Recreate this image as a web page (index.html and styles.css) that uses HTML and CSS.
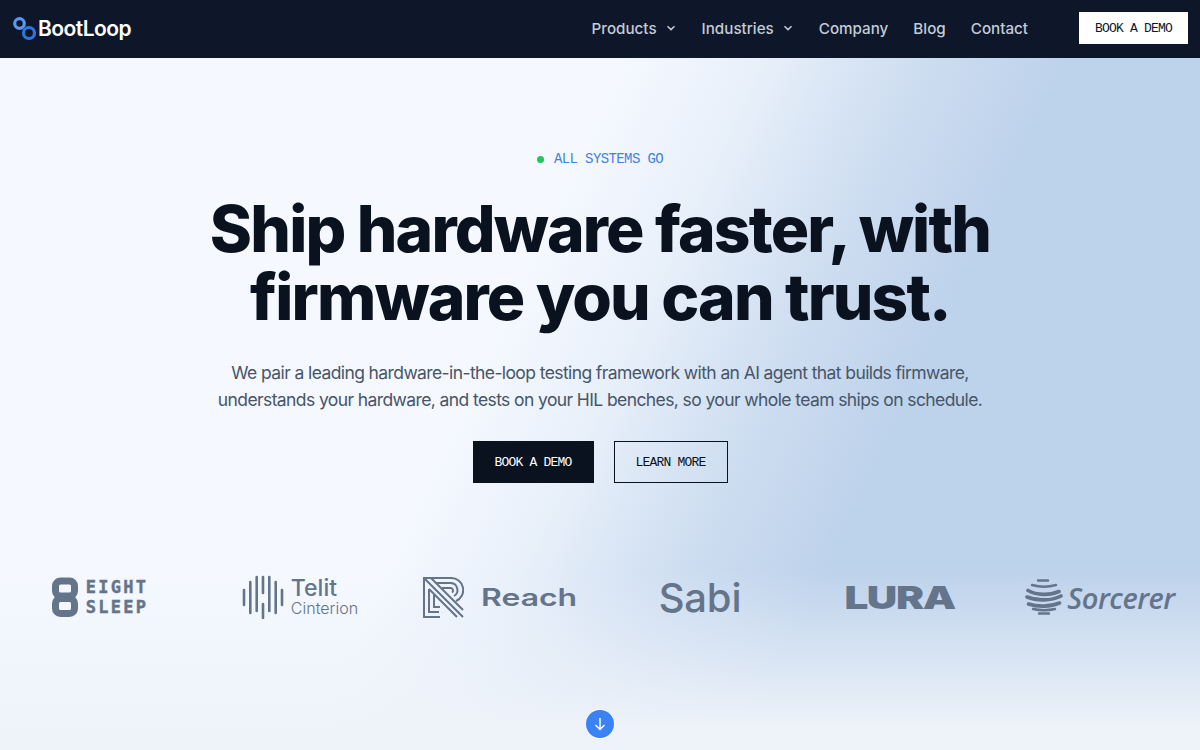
FILE: index.html
```html
<!DOCTYPE html>
<html lang="en">
<head>
  <meta charset="UTF-8">
  <meta name="viewport" content="width=device-width, initial-scale=1.0">
  <title>BootLoop</title>
  <link rel="stylesheet" href="styles.css">
</head>
<body>
  <!-- top bar -->
  <header class="topbar">
    <a class="brand" href="#">
      <svg class="brand-icon" width="24" height="24" viewBox="0 0 24 24" fill="none">
        <circle cx="6.500" cy="6.500" r="4.800" stroke="#5b97ee" stroke-width="3.200"/>
        <circle cx="16" cy="16" r="5.500" stroke="#2f74e0" stroke-width="3.200"/>
      </svg>
      <span>BootLoop</span>
    </a>
    <nav class="nav">
      <a href="#">Products
        <svg class="chev" width="10" height="6" viewBox="0 0 10 6" fill="none"><path d="M1.500 1.200 5 4.600l3.500-3.400" stroke="#c3cbd6" stroke-width="1.500"/></svg>
      </a>
      <a href="#">Industries
        <svg class="chev" width="10" height="6" viewBox="0 0 10 6" fill="none"><path d="M1.500 1.200 5 4.600l3.500-3.400" stroke="#c3cbd6" stroke-width="1.500"/></svg>
      </a>
      <a href="#">Company</a>
      <a href="#">Blog</a>
      <a href="#">Contact</a>
    </nav>
    <a class="btn btn-white" href="#">BOOK A DEMO</a>
  </header>

  <!-- hero -->
  <main class="hero">
    <div class="status"><span class="status-dot"></span>ALL SYSTEMS GO</div>
    <h1>Ship hardware faster, with<br>firmware you can trust.</h1>
    <p class="lead">We pair a leading hardware-in-the-loop testing framework with an AI agent that builds firmware,<br>understands your hardware, and tests on your HIL benches, so your whole team ships on schedule.</p>
    <div class="actions">
      <a class="btn btn-dark" href="#">BOOK A DEMO</a>
      <a class="btn btn-outline" href="#">LEARN MORE</a>
    </div>

    <!-- customer logos -->
    <div class="logos">
      <div class="logo logo-eight">
        <svg width="26" height="40" viewBox="0 0 26 40" fill="none" stroke="#64748b" stroke-width="7">
          <rect x="3.500" y="4" width="19" height="15" rx="5"/>
          <rect x="3.500" y="21.500" width="19" height="15" rx="5"/>
        </svg>
        <span>EIGHT<br>SLEEP</span>
      </div>
      <div class="logo logo-telit">
        <svg width="42" height="44" viewBox="0 0 42 44" stroke="#64748b" stroke-width="2.600" stroke-linecap="round">
          <path d="M2 15v15M8.300 7v31M14.700 2v34M21 2v16M21 29v14M27.300 2v34M33.700 7v31M40 15v15"/>
        </svg>
        <span class="telit-words"><b>Telit</b><i>Cinterion</i></span>
      </div>
      <div class="logo logo-reach">
        <svg width="41" height="41" viewBox="0 0 41 41" fill="none" stroke="#64748b" stroke-width="2">
          <path d="M40 40 1 1h27a12 12 0 0 1 5 23M34 40 6 12M1 1v39h16"/>
          <path d="M8 1l32 32M13 6h15a7 7 0 0 1 3 13M19 11h9a2.500 2.500 0 0 1 1 4.500M6 12v23h10M11 18v12h6"/>
        </svg>
        <span>Reach</span>
      </div>
      <div class="logo logo-sabi">Sabi</div>
      <div class="logo logo-lura"><span>LURA</span></div>
      <div class="logo logo-sorcerer">
        <svg width="38" height="36" viewBox="0 0 38 36" fill="none" stroke="#64748b" stroke-linecap="round">
          <path stroke-width="2.400" d="M13 1.500h10M7 6c7 2 17 2 24 0"/>
          <path stroke-width="3.600" d="M3 11.500c9 5 22 5 31 1M2 18c10 4 24 4 34-1M3.500 25c9 3 22 3 31-1"/>
          <path stroke-width="2.400" d="M8 30c7 1.500 15 1.500 22 0M14 34.500h10"/>
        </svg>
        <span>Sorcerer</span>
      </div>
    </div>

    <a class="scroll-down" href="#">
      <svg width="14" height="14" viewBox="0 0 14 14" fill="none" stroke="#fff" stroke-width="1.500"><path d="M7 1v11.500M2.500 8 7 12.500 11.500 8"/></svg>
    </a>
  </main>
</body>
</html>
```

FILE: styles.css
```css
* {
  box-sizing: border-box;
}
html, body {
  height: 100%;
}
body {
  margin: 0;
  font-family: "Inter", sans-serif;
  background-color: #f5f8ff;
  overflow: hidden;
}
a {
  text-decoration: none;
  color: inherit;
}
.topbar {
  height: 58px;
  background-color: #0e172a;
  display: flex;
  align-items: center;
  padding: 0 12px 2px 13px;
}
.brand {
  display: flex;
  align-items: center;
  gap: 1px;
  color: #fff;
  font-size: 21px;
  font-weight: 600;
  letter-spacing: -0.55px;
}
.brand-icon {
  margin-top: 2px;
}
.nav {
  margin-left: auto;
  display: flex;
  align-items: center;
  gap: 25px;
  color: #c3cbd6;
  font-size: 15.200px;
  font-weight: 500;
  margin-right: 51px;
}
.nav a {
  display: flex;
  align-items: center;
  gap: 9px;
}
.chev {
  margin-right: 1px;
}
.btn {
  display: flex;
  align-items: center;
  justify-content: center;
  font-family: "Liberation Mono", monospace;
  font-size: 13px;
  letter-spacing: -0.8px;
}
.btn-white {
  width: 109px;
  height: 32px;
  background-color: #fff;
  color: #0e172a;
}
.hero {
  height: 692px;
  padding-top: 91px;
  display: flex;
  flex-direction: column;
  align-items: center;
  background:
    linear-gradient(180deg, rgba(240,244,251,0) 74%, #eef3fa 97%),
    linear-gradient(115deg, #f5f8ff 41%, #e8f0fa 50%, #cfdef1 60%, #bdd2eb 70%, #bdd2eb 100%);
}
.status {
  display: flex;
  align-items: center;
  gap: 10px;
  height: 20px;
  font-family: "Liberation Mono", monospace;
  font-size: 14px;
  letter-spacing: -0.6px;
  color: #3f84dc;
}
.status-dot {
  width: 7px;
  height: 7px;
  border-radius: 50%;
  background-color: #22c55e;
}
h1 {
  margin: 26px 0 0;
  font-size: 64px;
  line-height: 68px;
  font-weight: 800;
  letter-spacing: -1.800px;
  color: #0a1220;
  text-align: center;
}
.lead {
  margin: 28px 0 0;
  font-size: 17.500px;
  line-height: 27px;
  letter-spacing: -0.6px;
  color: #475569;
  text-align: center;
}
.actions {
  display: flex;
  gap: 20px;
  margin-top: 28px;
}
.btn-dark {
  width: 121px;
  height: 42px;
  background-color: #0a1220;
  color: #fff;
}
.btn-outline {
  width: 114px;
  height: 42px;
  border: 1px solid #0a1220;
  color: #0a1220;
}
.logos {
  width: 100%;
  display: grid;
  grid-template-columns: repeat(6, 1fr);
  margin-top: 84px;
  color: #64748b;
}
.logo {
  display: flex;
  align-items: center;
  justify-content: center;
  height: 60px;
}
.logo-eight {
  gap: 8px;
  font-family: "DejaVu Sans Mono", monospace;
  font-size: 17px;
  line-height: 20px;
  font-weight: 700;
  letter-spacing: 2.300px;
  -webkit-text-stroke: 0.4px #64748b;
}
.logo-telit {
  gap: 7px;
}
.telit-words {
  display: flex;
  flex-direction: column;
}
.telit-words b {
  font-size: 23px;
  line-height: 23px;
  font-weight: 500;
}
.telit-words i {
  font-style: normal;
  font-size: 16px;
  line-height: 17px;
  font-weight: 300;
}
.logo-reach {
  gap: 29px;
  font-size: 24px;
  font-weight: 600;
}
.logo-reach span {
  margin-right: 12px;
  transform: scaleX(1.330);
}
.logo-sabi {
  font-size: 40px;
  font-weight: 500;
  letter-spacing: -0.2px;
}
.logo-lura span {
  font-size: 31px;
  font-weight: 900;
  letter-spacing: -1px;
  transform: scaleX(1.360);
}
.logo-sorcerer {
  gap: 4px;
  font-family: "Open Sans", sans-serif;
  font-size: 29px;
  font-style: italic;
  font-weight: 600;
  letter-spacing: -0.5px;
}
.scroll-down {
  margin-top: 83px;
  width: 28px;
  height: 28px;
  border-radius: 50%;
  background-color: #3b82f6;
  box-shadow: 0 0 0 1px rgba(255,255,255,0.6);
  display: flex;
  align-items: center;
  justify-content: center;
}
```
